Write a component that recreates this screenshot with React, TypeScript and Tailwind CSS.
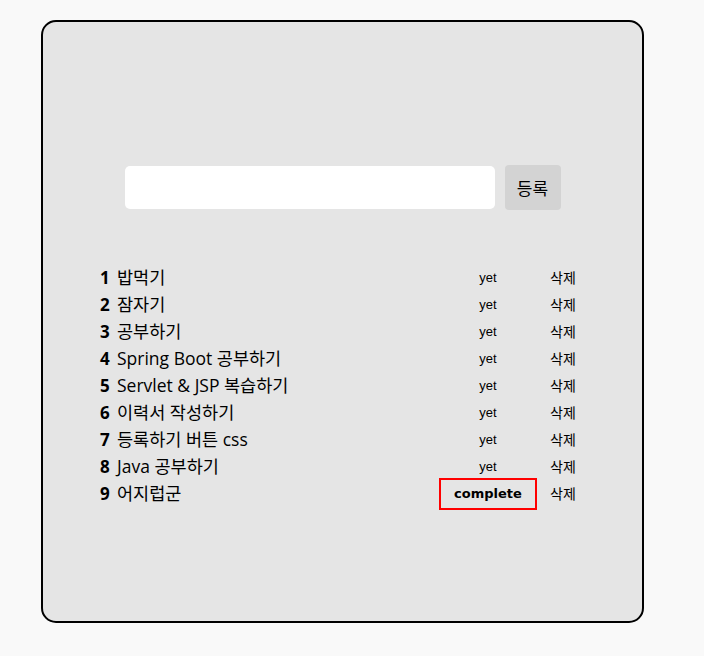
import React, { useState } from "react";

type Todo = { id: number; title: string; done: boolean };

const initial: Todo[] = [
  { id: 1, title: "밥먹기", done: false },
  { id: 2, title: "잠자기", done: false },
  { id: 3, title: "공부하기", done: false },
  { id: 4, title: "Spring Boot 공부하기", done: false },
  { id: 5, title: "Servlet & JSP 복습하기", done: false },
  { id: 6, title: "이력서 작성하기", done: false },
  { id: 7, title: "등록하기 버튼 css", done: false },
  { id: 8, title: "Java 공부하기", done: false },
  { id: 9, title: "어지럽군", done: true },
];

const font = "font-['Liberation_Sans','Noto_Sans_CJK_KR',sans-serif]";

const App: React.FC = () => {
  const [todos, setTodos] = useState<Todo[]>(initial);
  const [text, setText] = useState("");

  const add = () => {
    if (!text.trim()) return;
    setTodos([...todos, { id: todos.length + 1, title: text, done: false }]);
    setText("");
  };

  return (
    <div className={`min-h-[656px] bg-[#f9f9f9] pt-5 pl-[41px] ${font}`}>
      <div className="w-[603px] h-[603px] bg-[#e5e5e5] border-2 border-black rounded-[15px] flex flex-col">
        <div className="flex justify-center items-center gap-[10px] mt-[143px]">
          <input
            value={text}
            onChange={(e) => setText(e.target.value)}
            className="w-[370px] h-[43px] bg-white rounded-[5px] outline-none px-2 text-base"
          />
          <button
            onClick={add}
            className="w-[56px] h-[45px] bg-[#d3d3d3] rounded-[4px] text-[17px] text-black font-['Noto_Sans_CJK_KR',sans-serif]"
          >
            등록
          </button>
        </div>

        <ul className="mt-[54px] pl-[57px] pr-[22px]">
          {todos.map((t) => (
            <li key={t.id} className="flex items-center h-[27px]">
              <span className="w-[17px] font-bold text-[17px] font-['Open_Sans',sans-serif]">{t.id}</span>
              <span className="flex-1 text-[17.5px] text-black font-['Open_Sans','Noto_Sans_CJK_KR',sans-serif]">
                {t.title}
              </span>
              <span className="w-[98px] flex justify-center">
                {t.done ? (
                  <span className="w-[98px] h-[32px] border-2 border-[#ff0000] flex items-center justify-center font-bold text-[13px] font-['DejaVu_Sans',sans-serif]">
                    complete
                  </span>
                ) : (
                  <span className="text-[13px]">yet</span>
                )}
              </span>
              <span className="ml-[13px] w-[70px] text-[14px] cursor-pointer font-['Noto_Sans_CJK_KR',sans-serif]">
                삭제
              </span>
            </li>
          ))}
        </ul>
      </div>
    </div>
  );
};

export default App;
